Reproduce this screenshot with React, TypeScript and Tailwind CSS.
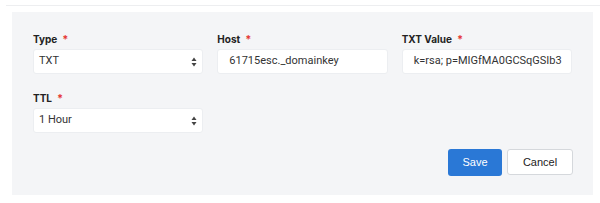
import React from 'react';

const Label: React.FC<{ text: string }> = ({ text }) => (
  <div className="flex items-center h-[12px] mb-[4px] text-[10px] font-bold text-[#222] leading-none" style={{ fontFamily: 'Inter, sans-serif' }}>
    <span>{text}</span>
    <span className="ml-[5px] text-[#e53935] text-[11px]">*</span>
  </div>
);

const SelectArrows = () => (
  <svg width="6" height="10" viewBox="0 0 6 10" className="absolute right-[5px] top-1/2 -translate-y-1/2">
    <path d="M3 0.5 L5.5 4 H0.5 Z" fill="#444" />
    <path d="M3 9.5 L5.5 6 H0.5 Z" fill="#444" />
  </svg>
);

const Field: React.FC<{ label: string; value: string; select?: boolean }> = ({ label, value, select }) => (
  <div className="flex flex-col">
    <Label text={label} />
    <div
      className={`relative h-[25px] bg-white rounded-[3px] border border-[#eceef1] flex items-center text-[11px] text-[#333] whitespace-nowrap overflow-hidden ${select ? 'pl-[5px]' : 'pl-[11px]'}`}
    >
      {value}
      {select && <SelectArrows />}
    </div>
  </div>
);

export default function App() {
  return (
    <div className="w-[600px] h-[203px] bg-white pt-[5px]" style={{ fontFamily: 'Roboto, "Liberation Sans", sans-serif' }}>
      <div className="ml-[6px] h-px bg-[#edeef0]" />
      <div className="ml-[12px] mr-[7px] mt-[6px] h-[183px] bg-[#f4f5f7] px-[21px] pt-[21px]">
        <div className="grid grid-cols-3 gap-x-[14px]">
          <Field label="Type" value="TXT" select />
          <Field label="Host" value="61715esc._domainkey" />
          <Field label="TXT Value" value="k=rsa; p=MIGfMA0GCSqGSIb3" />
        </div>
        <div className="grid grid-cols-3 gap-x-[14px] mt-[18px]">
          <Field label="TTL" value="1 Hour" select />
        </div>
        <div className="flex justify-end gap-[5px] mt-[16px] mr-[-1px]" style={{ fontFamily: '"Liberation Sans", Arial, sans-serif' }}>
          <button className="w-[54px] h-[27px] bg-[#2a78d6] text-white text-[11px] rounded-[3px]">Save</button>
          <button className="w-[66px] h-[26px] bg-white border border-[#d5d8dc] text-[#222] text-[11px] rounded-[3px]">Cancel</button>
        </div>
      </div>
    </div>
  );
}
